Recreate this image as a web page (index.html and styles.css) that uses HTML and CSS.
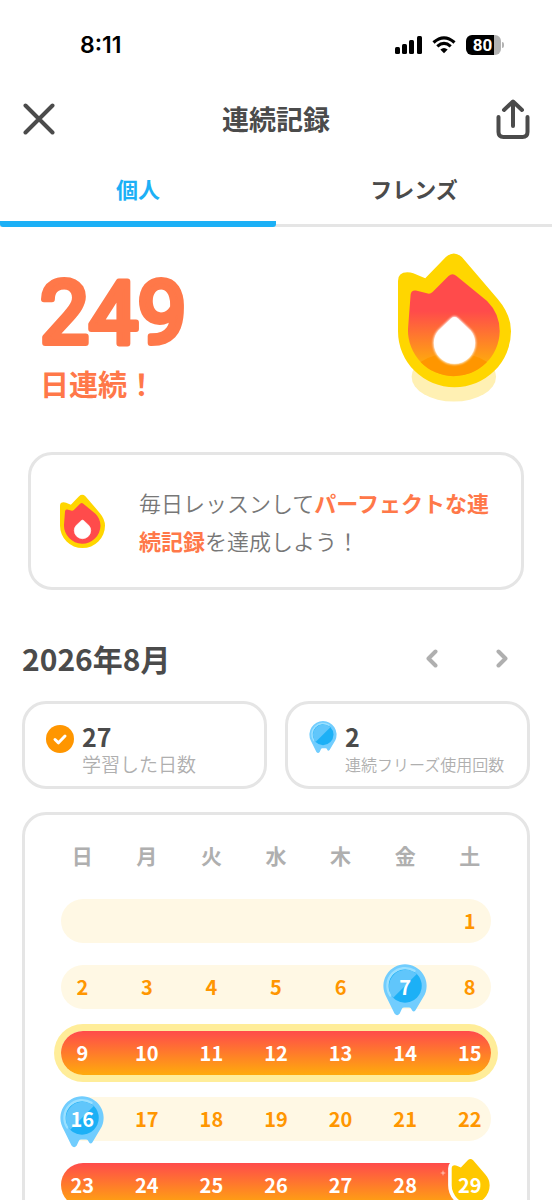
FILE: index.html
```html
<!DOCTYPE html>
<html lang="ja">
<head>
<meta charset="utf-8">
<meta name="viewport" content="width=device-width, initial-scale=1">
<title>連続記録</title>
<link rel="stylesheet" href="styles.css">
</head>
<body>
<svg class="sprite" aria-hidden="true">
  <defs>
    <linearGradient id="fire" gradientUnits="userSpaceOnUse" x1="0" y1="215" x2="0" y2="365">
      <stop offset="0" stop-color="#ff4b4b"/>
      <stop offset="1" stop-color="#ffa610"/>
    </linearGradient>
    <filter id="glow" x="-30%" y="-30%" width="160%" height="160%">
      <feGaussianBlur stdDeviation="4"/>
    </filter>
    <path id="flame-outer" d="M84 275V124Q84 98 112 98Q122 98 130 101L166 116L228 52Q252 30 276 52L384 178Q424 225 424 275A170 169 0 0 1 84 275Z"/>
    <path id="flame-inner" d="M122 165Q124 151 138 153L174 162Q181 164 188 157L236 109Q248 99 260 109L352 184Q390 222 390 275A138 138 0 0 1 114 270Z"/>
    <path id="flame-drop" d="M244 237Q254 228 264 237L302 273Q316 289 316 311A62 62 0 0 1 192 311Q192 289 206 273Z"/>
    <clipPath id="flame-clip"><use href="#flame-inner"/></clipPath>
    <symbol id="freeze" viewBox="182 648 134 160">
      <path fill="#71cdfe" d="M249 648A66 66 0 0 1 309 741L281 788Q274 797 269 786Q267 780 262 780H246Q242 780 240 783L233 798Q225 809 217 798L189 741A66 66 0 0 1 249 648Z"/>
      <circle cx="249" cy="714" r="51" fill="#1cb0f6"/>
      <path fill="#60c6fb" d="M213 750A51 51 0 0 1 285 678Z"/>
      <path fill="none" stroke="#9be0ff" stroke-width="7" stroke-linecap="round" d="M204 743A54 54 0 0 1 278 668"/>
    </symbol>
  </defs>
</svg>

<div class="app">
  <div class="status">
    <span class="clock">8:11</span>
    <div class="indicators">
      <svg width="27" height="18" viewBox="0 0 27 18" aria-hidden="true">
        <rect x="0" y="11" width="5" height="7" rx="1.5"/><rect x="7" y="8" width="5" height="10" rx="1.5"/><rect x="14" y="4" width="5" height="14" rx="1.5"/><rect x="22" y="0" width="5" height="18" rx="1.5"/>
      </svg>
      <svg width="24" height="18" viewBox="0 0 24 18" aria-hidden="true">
        <g fill="none" stroke="#000" stroke-width="3.2"><path d="M1.500 6.500Q12-2.800 22.500 6.500"/><path d="M5.300 10.400Q12 4.500 18.700 10.400"/></g>
        <path d="M8.300 13.500Q12 10.300 15.700 13.500L12 17.300Z"/>
      </svg>
      <span class="battery">80</span>
    </div>
  </div>

  <header class="topbar">
    <button class="icon-btn" aria-label="閉じる">
      <svg width="32" height="32" viewBox="0 0 32 32"><path d="M2.500 2.500L29.500 29.500M29.500 2.500L2.500 29.500"/></svg>
    </button>
    <h1>連続記録</h1>
    <button class="icon-btn" aria-label="共有">
      <svg width="34" height="40" viewBox="0 0 34 40"><path d="M17 27V3M8 11L17 2.500L26 11M2.500 18V33Q2.500 38 7.500 38H26.500Q31.500 38 31.500 33V18"/></svg>
    </button>
  </header>

  <nav class="tabs">
    <button class="tab active">個人</button>
    <button class="tab">フレンズ</button>
  </nav>

  <main>
    <section class="hero">
      <div>
        <svg class="count" width="150" height="84"><text x="0" y="64">249</text></svg>
        <div class="count-label">日連続！</div>
      </div>
      <svg class="hero-flame" viewBox="84 40 340 448" aria-hidden="true">
        <ellipse cx="252" cy="412" rx="127" ry="75" fill="#fff0b3"/>
        <use href="#flame-outer" fill="#ffd600"/>
        <use href="#flame-inner" fill="url(#fire)"/>
        <ellipse cx="252" cy="428" rx="136" ry="88" fill="#ff9600" clip-path="url(#flame-clip)"/>
        <use href="#flame-drop" fill="#fff" stroke="#fff" stroke-width="4" filter="url(#glow)"/>
        <use href="#flame-drop" fill="#fff"/>
      </svg>
    </section>

    <section class="goal">
      <svg class="goal-flame" viewBox="84 40 340 406" aria-hidden="true">
        <use href="#flame-outer" fill="#ffd600"/>
        <use href="#flame-inner" fill="#ff4b4b"/>
        <use href="#flame-drop" fill="#fff" stroke="#fff" stroke-width="5"/>
      </svg>
      <p>毎日レッスンして<strong>パーフェクトな連続記録</strong>を達成しよう！</p>
    </section>

    <section class="month">
      <div class="month-head">
        <h2>2026年8月</h2>
        <div class="month-nav">
          <button aria-label="前の月"><svg width="12" height="19" viewBox="0 0 12 19"><path d="M9.500 2.500L2.500 9.500L9.500 16.500"/></svg></button>
          <button aria-label="次の月"><svg width="12" height="19" viewBox="0 0 12 19"><path d="M2.500 2.500L9.500 9.500L2.500 16.500"/></svg></button>
        </div>
      </div>

      <div class="stats">
        <div class="stat">
          <svg class="stat-icon" width="28" height="32" viewBox="0 0 28 32" aria-hidden="true"><circle cx="14" cy="18" r="14" fill="#ff9600"/><path d="M9 18.500L12.500 21.800L19 15" fill="none" stroke="#fff" stroke-width="3" stroke-linecap="round" stroke-linejoin="round"/></svg>
          <div><strong>27</strong><span>学習した日数</span></div>
        </div>
        <div class="stat compact">
          <svg class="stat-icon" width="28" height="33" aria-hidden="true"><use href="#freeze"/></svg>
          <div><strong>2</strong><span>連続フリーズ使用回数</span></div>
        </div>
      </div>

      <div class="calendar">
        <table>
          <thead><tr><th>日</th><th>月</th><th>火</th><th>水</th><th>木</th><th>金</th><th>土</th></tr></thead>
          <tbody>
            <tr><td></td><td></td><td></td><td></td><td></td><td></td><td>1</td></tr>
            <tr><td>2</td><td>3</td><td>4</td><td>5</td><td>6</td><td class="frozen"><svg class="badge" aria-hidden="true"><use href="#freeze"/></svg><span>7</span></td><td>8</td></tr>
            <tr class="perfect"><td>9</td><td>10</td><td>11</td><td>12</td><td>13</td><td>14</td><td>15</td></tr>
            <tr><td class="frozen"><svg class="badge" aria-hidden="true"><use href="#freeze"/></svg><span>16</span></td><td>17</td><td>18</td><td>19</td><td>20</td><td>21</td><td>22</td></tr>
            <tr class="current"><td>23</td><td>24</td><td>25</td><td>26</td><td>27</td><td>28</td><td class="today"><svg class="today-flame" viewBox="24 -20 430 534" aria-hidden="true"><use href="#flame-outer" fill="#ffc800" stroke="#fff" stroke-width="64" stroke-linejoin="round" paint-order="stroke"/></svg><svg class="spark" viewBox="0 0 6 6" aria-hidden="true"><path d="M3 0L3.800 2.200L6 3L3.800 3.800L3 6L2.200 3.800L0 3L2.200 2.200Z"/></svg><span>29</span></td></tr>
          </tbody>
        </table>
      </div>
    </section>
  </main>
</div>
</body>
</html>
```
FILE: styles.css
```css
* { box-sizing: border-box; }

body {
  margin: 0;
  background: #fff;
  color: #4b4b4b;
  font-family: "Noto Sans CJK JP", sans-serif;
}

button {
  padding: 0;
  border: 0;
  background: none;
  color: inherit;
  font: inherit;
  cursor: pointer;
}

h1, h2, p { margin: 0; }
svg { display: block; }
.sprite { position: absolute; width: 0; height: 0; }

.app {
  display: flex;
  flex-direction: column;
  height: 100vh;
  overflow: hidden;
}

/* Status bar */
.status {
  display: flex;
  align-items: center;
  justify-content: space-between;
  flex: none;
  height: 90px;
  padding: 0 51px 0 80px;
  color: #000;
}
.clock { font: 600 23px/28px Inter, sans-serif; }
.indicators { display: flex; align-items: center; gap: 10px; }
.battery {
  position: relative;
  width: 35px;
  height: 20px;
  padding-right: 2px;
  border-radius: 6px;
  background: linear-gradient(90deg, #000 28px, #b3b3b3 28px);
  color: #fff;
  font: 700 17px/20px Roboto, sans-serif;
  text-align: center;
}
.battery::after {
  content: "";
  position: absolute;
  top: 7px;
  right: -3px;
  width: 2px;
  height: 6px;
  border-radius: 0 2px 2px 0;
  background: #b3b3b3;
}

/* Title bar */
.topbar {
  display: grid;
  grid-template-columns: 40px 1fr 40px;
  align-items: center;
  flex: none;
  height: 58px;
  padding: 0 19px;
}
.topbar h1 { font-size: 27px; line-height: 40px; text-align: center; }
.icon-btn { display: grid; place-items: center; height: 40px; }
.icon-btn path {
  fill: none;
  stroke: #4b4b4b;
  stroke-width: 4;
  stroke-linecap: round;
  stroke-linejoin: round;
}

/* Tabs */
.tabs {
  display: grid;
  grid-template-columns: 1fr 1fr;
  flex: none;
  height: 79px;
  box-shadow: inset 0 -3px #e5e5e5;
}
.tab {
  padding-top: 6px;
  border-bottom: 6px solid transparent;
  font-size: 22px;
  font-weight: 700;
}
.tab.active {
  color: #1cb0f6;
  background: linear-gradient(#1cb0f6, #1cb0f6) 0 100% / 100% 6px no-repeat border-box;
  border-radius: 3px;
}

main {
  flex: 1;
  min-height: 0;
  overflow-y: auto;
  scrollbar-width: none;
}

/* Streak count */
.hero {
  display: flex;
  justify-content: space-between;
  height: 175px;
  padding: 26px 41px 0 40px;
}
.count {
  margin-top: 26px;
  overflow: visible;
}
.count text {
  fill: #ff7849;
  stroke: #ff7849;
  stroke-width: 6px;
  stroke-linejoin: round;
  font: 400 87px Roboto, sans-serif;
}
.count-label {
  color: #ff7849;
  font-size: 29px;
  font-weight: 700;
  line-height: 40px;
}
.hero-flame { width: 113px; height: 149px; }

/* Goal card */
.goal, .stat, .calendar {
  border: 3px solid #e5e5e5;
  border-radius: 24px;
}
.goal {
  display: flex;
  align-items: center;
  gap: 34px;
  margin: 50px 28px 0;
  padding: 28px 20px 28px 29px;
}
.goal-flame { flex: none; width: 45px; height: 55px; }
.goal p {
  color: #777;
  font-size: 22px;
  font-weight: 350;
  line-height: 38px;
}
.goal strong { color: #ff7849; font-weight: 700; }

/* Month summary */
.month { padding: 48px 22px 0; }
.month-head {
  display: flex;
  align-items: center;
  justify-content: space-between;
  padding-right: 10px;
}
.month-head h2 { font-size: 30px; line-height: 40px; }
.month-nav { display: flex; gap: 34px; }
.month-nav button { display: grid; place-items: center; width: 36px; height: 36px; }
.month-nav path {
  fill: none;
  stroke: #afafaf;
  stroke-width: 4;
  stroke-linecap: round;
  stroke-linejoin: round;
}

.stats {
  display: grid;
  grid-template-columns: 1fr 1fr;
  gap: 18px;
  margin-top: 23px;
}
.stat {
  display: flex;
  align-items: flex-start;
  gap: 8px;
  height: 88px;
  padding: 17px 0 0 21px;
  white-space: nowrap;
}
.stat strong, .stat span { display: block; }
.stat strong { font-size: 25px; line-height: 30px; }
.stat span {
  color: #afafaf;
  font-size: 19px;
  font-weight: 350;
  line-height: 26px;
}
.stat.compact span { font-size: 16px; }

/* Calendar */
.calendar { margin-top: 23px; padding: 24px 25px; }
.calendar table, .calendar thead { display: block; }
.calendar tr {
  position: relative;
  display: grid;
  grid-template-columns: repeat(7, 1fr);
}
.calendar th {
  padding: 0;
  color: #afafaf;
  font-size: 21px;
  font-weight: 700;
  line-height: 32px;
}
.calendar tbody {
  display: grid;
  gap: 22px;
  padding-top: 28px;
}
.calendar td {
  position: relative;
  height: 44px;
  padding: 0;
  color: #ff9600;
  font-size: 20px;
  font-weight: 700;
  line-height: 44px;
  text-align: center;
}
.calendar td span { position: relative; }
.calendar tbody tr::before {
  content: "";
  position: absolute;
  inset: 0 11px;
  border-radius: 22px;
  background: #fff8e4;
}
.calendar .perfect::before {
  background: linear-gradient(#ff4b4b, #ffab0b);
  box-shadow: 0 0 0 7px #ffed99;
}
.calendar .current::before {
  right: 45px;
  border-radius: 22px 0 0 22px;
  background: linear-gradient(#ff4b4b, #ffab0b);
}
.calendar .perfect td, .calendar .current td, .calendar .frozen { color: #fff; }
.badge {
  position: absolute;
  top: -1px;
  left: calc(50% - 22px);
  width: 44px;
  height: 53px;
}
.today-flame {
  position: absolute;
  top: -11px;
  left: calc(50% - 25px);
  width: 48px;
  height: 60px;
}
.spark {
  position: absolute;
  top: 7px;
  left: 3px;
  width: 6px;
  height: 6px;
  fill: #ffb3a0;
}
```
